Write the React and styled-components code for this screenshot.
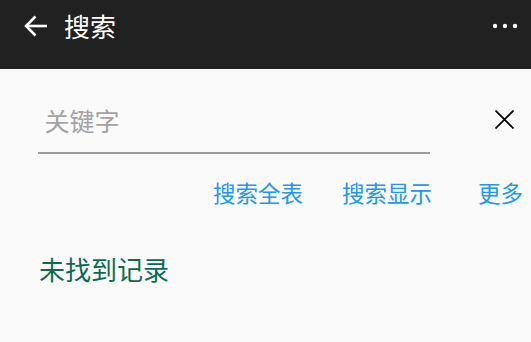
import React from "react";
import styled, { createGlobalStyle } from "styled-components";

const Global = createGlobalStyle`
  html, body { margin: 0; padding: 0; background: #fafafa; }
  body { font-family: "Noto Sans CJK SC", "Noto Sans", sans-serif; }
  * { box-sizing: border-box; }
`;

const Page = styled.div`
  width: 531px;
  height: 342px;
  background: #fafafa;
  overflow: hidden;
`;

const Toolbar = styled.header`
  height: 69px;
  background: #212121;
  color: #ffffff;
`;

const ToolbarRow = styled.div`
  height: 52px;
  display: flex;
  align-items: center;
  padding-left: 23px;
  padding-right: 13px;
`;

const IconButton = styled.button`
  display: flex;
  align-items: center;
  justify-content: center;
  background: none;
  border: none;
  padding: 0;
  margin: 0;
  cursor: pointer;
  color: inherit;
`;

const Title = styled.h1`
  margin: 0 0 0 16px;
  font-size: 26px;
  line-height: 1;
  font-weight: 400;
  flex: 1;
`;

const SearchRow = styled.div`
  display: flex;
  align-items: flex-start;
  margin-top: 23px;
`;

const Field = styled.input`
  width: 392px;
  height: 62px;
  margin-left: 38px;
  padding: 0 0 4px 6.5px;
  border: none;
  border-bottom: 2px solid #9b9b9b;
  background: transparent;
  font-family: inherit;
  font-size: 25px;
  color: #212121;
  outline: none;
  &::placeholder { color: #a3a3a3; }
`;

const Clear = styled(IconButton)`
  margin-left: 65px;
  margin-top: 18px;
  width: 19px;
  height: 19px;
  color: #000;
`;

const Actions = styled.div`
  display: flex;
  justify-content: flex-end;
  padding-right: 8px;
  margin-top: 27px;
`;

const LinkButton = styled.button`
  background: none;
  border: none;
  padding: 0;
  margin: 0 0 0 ${(p) => p.$gap}px;
  font-family: inherit;
  font-size: 22.5px;
  line-height: 1;
  color: #2196f3;
  cursor: pointer;
`;

const Empty = styled.p`
  margin: 52px 0 0 39px;
  font-size: 26px;
  line-height: 1;
  color: #0b6b50;
`;

const BackIcon = () => (
  <svg width="25" height="22" viewBox="0 0 25 22" fill="none" stroke="currentColor" strokeWidth="2.6" strokeLinecap="butt">
    <path d="M24 11H3" />
    <path d="M12.5 1.5L3 11l9.5 9.5" />
  </svg>
);

const MoreIcon = () => (
  <svg width="26" height="6" viewBox="0 0 26 6" fill="#fff">
    <circle cx="3" cy="3" r="2.2" />
    <circle cx="13" cy="3" r="2.2" />
    <circle cx="23" cy="3" r="2.2" />
  </svg>
);

const CloseIcon = () => (
  <svg width="19" height="19" viewBox="0 0 19 19" stroke="currentColor" strokeWidth="1.7">
    <path d="M0.5 0.5L18.5 18.5M18.5 0.5L0.5 18.5" />
  </svg>
);

export default function App() {
  return (
    <Page>
      <Global />
      <Toolbar>
        <ToolbarRow>
          <IconButton aria-label="返回"><BackIcon /></IconButton>
          <Title>搜索</Title>
          <IconButton aria-label="更多"><MoreIcon /></IconButton>
        </ToolbarRow>
      </Toolbar>
      <SearchRow>
        <Field placeholder="关键字" />
        <Clear aria-label="清除"><CloseIcon /></Clear>
      </SearchRow>
      <Actions>
        <LinkButton $gap={0}>搜索全表</LinkButton>
        <LinkButton $gap={39}>搜索显示</LinkButton>
        <LinkButton $gap={46}>更多</LinkButton>
      </Actions>
      <Empty>未找到记录</Empty>
    </Page>
  );
}
